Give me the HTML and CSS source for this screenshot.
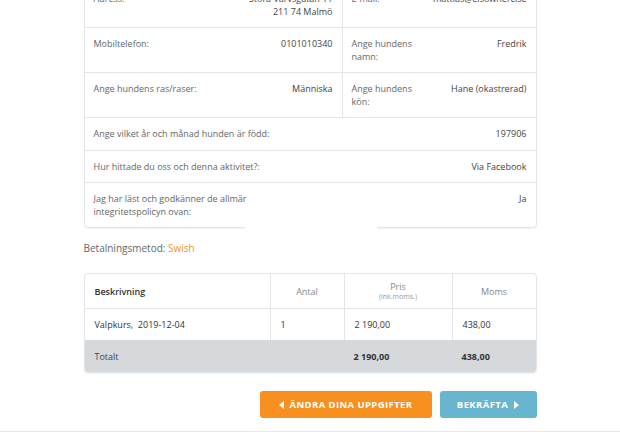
FILE: index.html
```html
<!DOCTYPE html>
<html lang="sv">
<head>
<meta charset="utf-8">
<link rel="stylesheet" href="styles.css">
</head>
<body>
<div class="page">
  <div class="card info">
    <div class="row">
      <div class="cell"><span class="label">Adress:</span><span class="value">Stora Varvsgatan 11<br>211 74 Malmö</span></div>
      <div class="cell"><span class="label">E-mail:</span><span class="value">mattias@elsownercise</span></div>
    </div>
    <div class="row">
      <div class="cell"><span class="label">Mobiltelefon:</span><span class="value">0101010340</span></div>
      <div class="cell"><span class="label narrow">Ange hundens namn:</span><span class="value">Fredrik</span></div>
    </div>
    <div class="row">
      <div class="cell"><span class="label">Ange hundens ras/raser:</span><span class="value">Människa</span></div>
      <div class="cell"><span class="label narrow">Ange hundens kön:</span><span class="value">Hane (okastrerad)</span></div>
    </div>
    <div class="row">
      <div class="cell wide"><span class="label">Ange vilket år och månad hunden är född:</span><span class="value">197906</span></div>
    </div>
    <div class="row">
      <div class="cell wide"><span class="label">Hur hittade du oss och denna aktivitet?:</span><span class="value">Via Facebook</span></div>
    </div>
    <div class="row last">
      <div class="cell wide"><span class="label long">Jag har läst och godkänner de allmär integritetspolicyn ovan:</span><span class="value">Ja</span></div>
    </div>
    <div class="mask"></div>
  </div>

  <p class="payment">Betalningsmetod: <span class="method">Swish</span></p>

  <div class="card order">
    <div class="orow head">
      <div class="oc first">Beskrivning</div>
      <div class="oc center">Antal</div>
      <div class="oc center stack"><span>Pris</span><small>(ink.moms.)</small></div>
      <div class="oc center">Moms</div>
    </div>
    <div class="orow item">
      <div class="oc first">Valpkurs,&nbsp; 2019-12-04</div>
      <div class="oc">1</div>
      <div class="oc">2 190,00</div>
      <div class="oc">438,00</div>
    </div>
    <div class="orow total">
      <div class="oc first">Totalt</div>
      <div class="oc"></div>
      <div class="oc strong">2 190,00</div>
      <div class="oc strong">438,00</div>
    </div>
  </div>

  <div class="actions">
    <button class="btn btn-orange"><span class="tri tri-left"></span>ÄNDRA DINA UPPGIFTER</button>
    <button class="btn btn-blue">BEKRÄFTA<span class="tri tri-right"></span></button>
  </div>
</div>
<div class="footer-line"></div>
</body>
</html>
```
FILE: styles.css
```css
* { box-sizing: border-box; }
html, body { margin: 0; padding: 0; background: #fff; }
body {
  font-family: "Open Sans", "DejaVu Sans", sans-serif;
  font-size: 9px;
  color: #555;
  overflow: hidden;
}
.page {
  width: 453px;
  margin: -18px auto 0;
}
.card {
  border: 1px solid #e2e6e8;
  border-radius: 4px;
  box-shadow: 0 1px 2px rgba(0,0,0,0.06);
  background: #fff;
}
.info { position: relative; }
.row {
  display: flex;
  border-bottom: 1px solid #e2e6e8;
}
.row.last { border-bottom: 0; }
.cell {
  flex: 0 0 257px;
  display: flex;
  justify-content: space-between;
  gap: 8px;
  padding: 10px 9px 9px 9px;
  line-height: 12.5px;
}
.cell + .cell { flex: 1 1 auto; border-left: 1px solid #e2e6e8; }
.cell.wide { flex: 1 1 auto; }
.label { color: #666; }
.label.narrow { max-width: 62px; }
.label.long { max-width: 200px; }
.value { color: #444; text-align: right; }
.mask {
  position: absolute;
  left: 160px;
  width: 132px;
  bottom: -4px;
  height: 6px;
  background: #fff;
}
.payment {
  margin: 12px 0 0;
  font-size: 10px;
  line-height: 16px;
  color: #666;
}
.method { color: #f39224; }
.order {
  margin-top: 17px;
  overflow: hidden;
}
.orow {
  display: grid;
  grid-template-columns: 185px 74px 108px 84px;
}
.oc {
  padding: 0 10px;
  display: flex;
  align-items: center;
  color: #444;
  font-size: 9px;
}
.oc + .oc { border-left: 1px solid #e2e6e8; }
.head { height: 35px; border-bottom: 1px solid #e2e6e8; }
.head .oc.first { color: #333; font-weight: 600; }
.center { justify-content: center; color: #888 !important; }
.stack { flex-direction: column; }
.stack span { line-height: 11px; }
.stack small { font-size: 7px; line-height: 9px; color: #999; }
.item { height: 31px; }
.item .oc { color: #333; }
.total { height: 32px; background: #d5d9dc; }
.total .oc { border-left: 0; color: #444; }
.total .strong { font-weight: 700; color: #333; }
.actions {
  display: flex;
  justify-content: flex-end;
  gap: 8px;
  margin-top: 18px;
}
.btn {
  height: 27px;
  border: 0;
  border-radius: 3px;
  color: #fff;
  font-family: "Open Sans", "DejaVu Sans", sans-serif;
  font-weight: 700;
  font-size: 9.5px;
  letter-spacing: 0.4px;
  display: flex;
  align-items: center;
  justify-content: center;
  gap: 6px;
  padding: 0;
}
.btn-orange { width: 172px; background: #f7901e; }
.btn-blue { width: 97px; background: #68b5cf; }
.tri { width: 0; height: 0; border-top: 4px solid transparent; border-bottom: 4px solid transparent; }
.tri-left { border-right: 5px solid #fff; }
.tri-right { border-left: 5px solid #fff; }
.footer-line {
  margin-top: 13px;
  height: 1px;
  background: #e6e8ea;
}
```
